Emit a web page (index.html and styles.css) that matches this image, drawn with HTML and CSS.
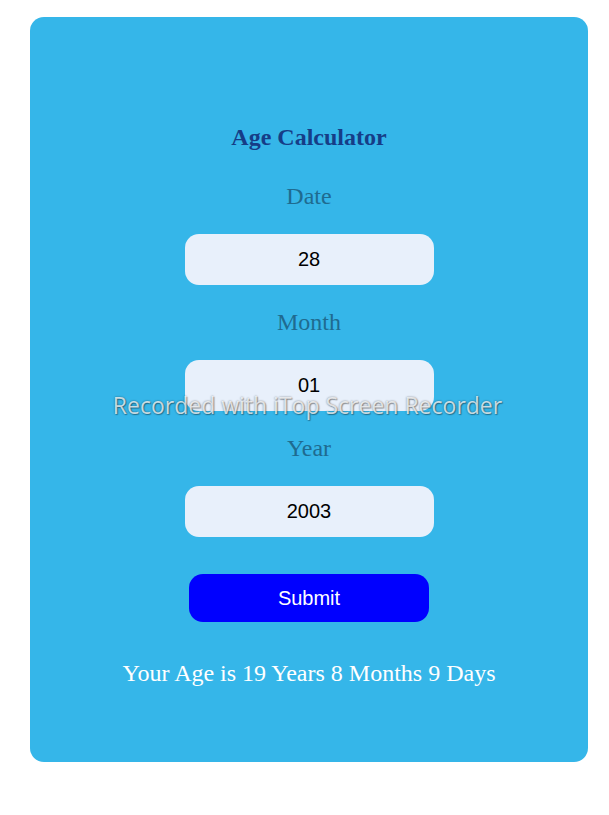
FILE: index.html
```html
<!DOCTYPE html>
<html>
<head>
<meta charset="utf-8">
<link rel="stylesheet" href="styles.css">
</head>
<body>
<div class="card">
  <h1 class="title">Age Calculator</h1>
  <label class="label">Date</label>
  <input class="field" type="text" value="28">
  <label class="label">Month</label>
  <input class="field" type="text" value="01">
  <label class="label">Year</label>
  <input class="field" type="text" value="2003">
  <button class="submit">Submit</button>
  <p class="result">Your Age is 19 Years 8 Months 9 Days</p>
</div>
<div class="watermark">Recorded with iTop Screen Recorder</div>
</body>
</html>
```

FILE: styles.css
```css
html, body {
  margin: 0;
  padding: 0;
  background: #ffffff;
}
body {
  padding: 17px 21px 0 30px;
  font-family: "Liberation Serif", "Times New Roman", serif;
  position: relative;
  height: 815px;
  box-sizing: border-box;
}
.card {
  background: #35b6e9;
  border-radius: 14px;
  height: 745px;
  box-sizing: border-box;
  padding-top: 107px;
  display: flex;
  flex-direction: column;
  align-items: center;
}
.title {
  margin: 0;
  font-size: 24px;
  line-height: 27px;
  font-weight: bold;
  color: #163d87;
}
.label {
  display: block;
  margin-top: 32px;
  font-size: 24px;
  line-height: 27px;
  color: #1f6b90;
}
.field ~ .label {
  margin-top: 24px;
}
.field {
  display: block;
  margin-top: 24px;
  width: 249px;
  height: 51px;
  box-sizing: border-box;
  border: none;
  outline: none;
  border-radius: 14px;
  background: #e8f0fb;
  text-align: center;
  font-family: "Liberation Sans", Arial, sans-serif;
  font-size: 20px;
  color: #000000;
  padding: 0;
}
.submit {
  margin-top: 37px;
  width: 240px;
  height: 48px;
  border: none;
  border-radius: 14px;
  background: #0000ff;
  color: #ffffff;
  font-family: "Liberation Sans", Arial, sans-serif;
  font-size: 20px;
  padding: 0;
}
.result {
  margin: 38px 0 0;
  font-size: 24px;
  line-height: 27px;
  color: #ffffff;
}
.watermark {
  position: absolute;
  top: 390px;
  left: 0;
  width: 615px;
  text-align: center;
  font-family: "Open Sans", "Noto Sans", sans-serif;
  font-size: 23px;
  line-height: 30px;
  color: rgba(255, 255, 255, 0.75);
  text-shadow: 0 0 2px rgba(0, 0, 0, 0.45), 1px 1px 1px rgba(0, 0, 0, 0.3);
  pointer-events: none;
}
```
